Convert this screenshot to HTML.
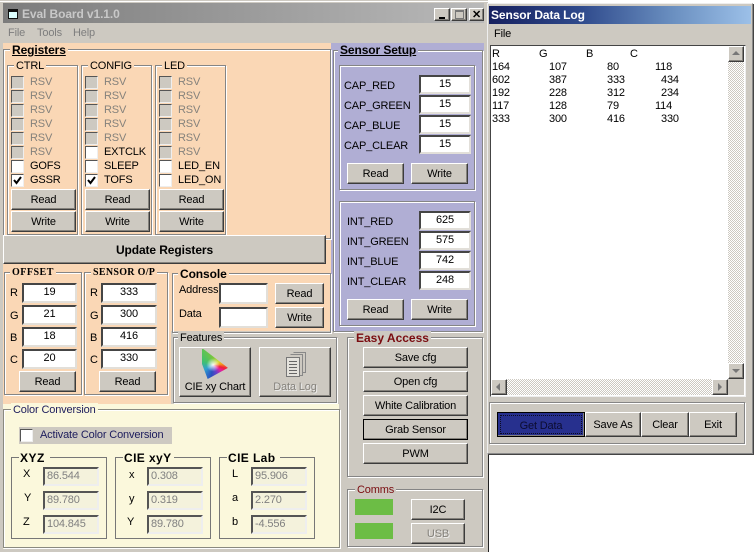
<!DOCTYPE html>
<html><head><meta charset="utf-8"><style>
html,body{margin:0;padding:0;background:#fff}
#p{position:relative;width:756px;height:552px;overflow:hidden;font:11px/14px "Liberation Sans",sans-serif;letter-spacing:-.15px;color:#000;background:#fff}
#p div,#p span,#p i{position:absolute;box-sizing:border-box;display:block;white-space:nowrap;font-style:normal}
.a{background:#cdc9c1}
.g{border:1px solid #858585;box-shadow:inset 1px 1px 0 #fff,1px 1px 0 #fff}
.b{background:#cdc9c1;border:1px solid;border-color:#fff #3c3c3c #3c3c3c #fff;box-shadow:inset -1px -1px 0 #85827c;display:flex!important;align-items:center;justify-content:center}
.dis{color:#85827c;text-shadow:1px 1px 0 #eee}
.i{background:#fff;border:2px solid;border-color:#454545 #e2dfd9 #e2dfd9 #454545;text-align:center;line-height:15px}
.o{border:2px solid;border-color:#555 #eee #eee #555;color:#808080;line-height:14px;padding-left:2px;background:#f4f2dc}
.l{background:#fad7b5;padding:0 2px}
.h{font-weight:bold;font-size:12px}
.col .r{position:relative!important;height:14px;padding-left:19px;line-height:14px}
.r:before{content:"";position:absolute;left:0;top:1px;width:13px;height:13px;box-sizing:border-box;background:#fff;border:1px solid;border-color:#555 #eee #eee #555}
.d{color:#85827c}
.d:before{background:#cdc9c1!important}
.k svg{position:absolute;left:2px;top:3px}
</style></head><body><div id="p">

<div class="a" style="left:0;top:0;width:488px;height:552px"></div>
<div style="left:0;top:1px;width:488px;height:1px;background:#fff"></div>
<div style="left:488px;top:453px;width:1px;height:99px;background:#222"></div>
<div style="left:3px;top:3px;width:481px;height:20px;background:linear-gradient(90deg,#7c7c7c,#b9b9b9)"></div>
<svg style="position:absolute;left:7px;top:8px" width="12" height="11"><path d="M1.500 1.500h9v9h-9z" fill="#dff" stroke="#111"/><path d="M1 3h10" stroke="#111" stroke-width="2"/></svg>
<span class="h" style="left:22px;top:7px;letter-spacing:-.1px;color:#c8c8c8">Eval Board v1.1.0</span>
<div class="b" style="left:434px;top:8px;width:16px;height:13px"><i style="left:4px;top:8px;width:6px;height:2px;background:#000"></i></div>
<div class="b" style="left:451px;top:8px;width:16px;height:13px"><i style="left:3px;top:1px;width:9px;height:9px;border:1px solid #777;border-top-width:2px"></i></div>
<div class="b" style="left:469px;top:8px;width:15px;height:13px;font-size:11px;font-weight:bold">✕</div>
<span style="left:8px;top:26px;color:#7e7e7e">File</span><span style="left:37px;top:26px;color:#7e7e7e">Tools</span><span style="left:73px;top:26px;color:#7e7e7e">Help</span>

<!-- colour zones -->
<div style="left:3px;top:43px;width:329px;height:361px;background:#fad7b5"></div>
<div style="left:331px;top:43px;width:153px;height:288px;background:#b0aed4"></div>
<div class="a" style="left:171px;top:331px;width:170px;height:73px"></div>
<div style="left:3px;top:404px;width:336px;height:145px;background:#fbf8dc"></div>

<!-- Registers -->
<div class="g" style="left:3px;top:49px;width:328px;height:190px"></div>
<span class="l h" style="left:10px;top:43px;text-decoration:underline;letter-spacing:-.1px">Registers</span>

<div class="g" style="left:7px;top:65px;width:71px;height:170px"></div><span class="l" style="left:14px;top:59px">CTRL</span>
<div class="g" style="left:81px;top:65px;width:71px;height:170px"></div><span class="l" style="left:88px;top:59px">CONFIG</span>
<div class="g" style="left:155px;top:65px;width:71px;height:170px"></div><span class="l" style="left:162px;top:59px">LED</span>

<div class="col" style="left:11px;top:75px;width:60px"><div class="r d">RSV</div><div class="r d">RSV</div><div class="r d">RSV</div><div class="r d">RSV</div><div class="r d">RSV</div><div class="r d">RSV</div><div class="r">GOFS</div><div class="r k">GSSR<svg width="9" height="9"><path d="M1 4l2.500 3L8 1" fill="none" stroke="#000" stroke-width="2"/></svg></div></div>
<div class="col" style="left:85px;top:75px;width:62px"><div class="r d">RSV</div><div class="r d">RSV</div><div class="r d">RSV</div><div class="r d">RSV</div><div class="r d">RSV</div><div class="r">EXTCLK</div><div class="r">SLEEP</div><div class="r k">TOFS<svg width="9" height="9"><path d="M1 4l2.500 3L8 1" fill="none" stroke="#000" stroke-width="2"/></svg></div></div>
<div class="col" style="left:159px;top:75px;width:62px"><div class="r d">RSV</div><div class="r d">RSV</div><div class="r d">RSV</div><div class="r d">RSV</div><div class="r d">RSV</div><div class="r d">RSV</div><div class="r">LED_EN</div><div class="r">LED_ON</div></div>

<div class="b" style="left:11px;top:189px;width:65px;height:21px">Read</div>
<div class="b" style="left:11px;top:211px;width:65px;height:21px">Write</div>
<div class="b" style="left:85px;top:189px;width:65px;height:21px">Read</div>
<div class="b" style="left:85px;top:211px;width:65px;height:21px">Write</div>
<div class="b" style="left:159px;top:189px;width:65px;height:21px">Read</div>
<div class="b" style="left:159px;top:211px;width:65px;height:21px">Write</div>

<div class="b h" style="left:3px;top:235px;width:323px;height:29px;letter-spacing:-.1px">Update Registers</div>

<!-- Offset -->
<div class="g" style="left:4px;top:272px;width:78px;height:123px"></div>
<span class="l" style="left:10px;top:266px;font:bold 10px/14px 'Liberation Serif',serif;letter-spacing:.5px">OFFSET</span>
<span style="left:10px;top:286px">R</span><span style="left:10px;top:309px">G</span><span style="left:10px;top:331px">B</span><span style="left:10px;top:353px">C</span>
<div class="i" style="left:22px;top:283px;width:55px;height:20px">19</div>
<div class="i" style="left:22px;top:305px;width:55px;height:20px">21</div>
<div class="i" style="left:22px;top:327px;width:55px;height:20px">18</div>
<div class="i" style="left:22px;top:349px;width:55px;height:20px">20</div>
<div class="b" style="left:19px;top:371px;width:57px;height:21px">Read</div>

<!-- Sensor -->
<div class="g" style="left:84px;top:272px;width:84px;height:123px"></div>
<span class="l" style="left:91px;top:266px;font:bold 10px/14px 'Liberation Serif',serif;letter-spacing:.3px">SENSOR O/P</span>
<span style="left:90px;top:286px">R</span><span style="left:90px;top:309px">G</span><span style="left:90px;top:331px">B</span><span style="left:90px;top:353px">C</span>
<div class="i" style="left:101px;top:283px;width:56px;height:20px">333</div>
<div class="i" style="left:101px;top:305px;width:56px;height:20px">300</div>
<div class="i" style="left:101px;top:327px;width:56px;height:20px">416</div>
<div class="i" style="left:101px;top:349px;width:56px;height:20px">330</div>
<div class="b" style="left:99px;top:371px;width:57px;height:21px">Read</div>

<!-- Console -->
<div class="g" style="left:172px;top:273px;width:159px;height:60px"></div>
<span class="l h" style="left:178px;top:267px;letter-spacing:-.1px">Console</span>
<span style="left:179px;top:283px">Address</span><span style="left:179px;top:307px">Data</span>
<div class="i" style="left:219px;top:283px;width:49px;height:21px"></div>
<div class="i" style="left:219px;top:307px;width:49px;height:21px"></div>
<div class="b" style="left:275px;top:283px;width:49px;height:21px">Read</div>
<div class="b" style="left:275px;top:307px;width:49px;height:21px">Write</div>

<!-- Features -->
<div class="g" style="left:173px;top:337px;width:164px;height:66px"></div>
<span class="a" style="left:178px;top:331px;padding:0 2px">Features</span>
<div class="b" style="left:179px;top:347px;width:72px;height:50px;align-items:flex-end;padding-bottom:2px">CIE xy Chart</div>
<div style="left:202px;top:349px;width:27px;height:30px;clip-path:polygon(0 0,5% 0,96% 63%,21% 100%,0 50%);background:radial-gradient(circle at 41% 53%,rgba(255,255,255,.95) 0,rgba(255,255,255,0) 30%),conic-gradient(from 0deg at 41% 53%,#7ac63c 0deg,#d8d82c 60deg,#f59a20 85deg,#f0203a 105deg,#e020a0 125deg,#6a40c8 155deg,#2a50c0 190deg,#30a0d0 240deg,#40c070 290deg,#7ac63c 360deg)"></div>
<div class="b dis" style="left:259px;top:347px;width:72px;height:50px;align-items:flex-end;padding-bottom:2px">Data Log</div>
<svg style="position:absolute;left:285px;top:351px" width="23" height="28"><path d="M8.500 1.500h12v20h-3" fill="none" stroke="#888"/><path d="M5.500 3.500h12v21h-3" fill="#cdc9c1" stroke="#888"/><path d="M1.500 6.500h13v19h-13z" fill="#e4e2dc" stroke="#777"/><path d="M4 10.500h8M4 13.500h8M4 16.500h8M4 19.500h8M4 22.500h8" stroke="#666"/></svg>

<!-- Colour conversion -->
<div class="g" style="left:3px;top:409px;width:337px;height:139px;border-color:#8a8a80"></div>
<span style="left:11px;top:403px;background:#fbf8dc;padding:0 2px;color:#1c1c5c">Color Conversion</span>
<div style="left:19px;top:427px;width:153px;height:17px;background:#cdc9c1"></div>
<div style="left:20px;top:429px;width:13px;height:13px;background:#fff;border:1px solid;border-color:#555 #eee #eee #555"></div>
<span style="left:40px;top:428px;color:#1c1c5c">Activate Color Conversion</span>

<div class="g" style="left:11px;top:457px;width:96px;height:82px;border-color:#777;box-shadow:none"></div>
<span class="h" style="left:19px;top:451px;background:#fbf8dc;padding:0 5px 0 1px;letter-spacing:.5px">XYZ</span>
<div class="g" style="left:115px;top:457px;width:96px;height:82px;border-color:#777;box-shadow:none"></div>
<span class="h" style="left:123px;top:451px;background:#fbf8dc;padding:0 2px 0 1px;letter-spacing:.4px">CIE xyY</span>
<div class="g" style="left:219px;top:457px;width:96px;height:82px;border-color:#777;box-shadow:none"></div>
<span class="h" style="left:227px;top:451px;background:#fbf8dc;padding:0 5px 0 1px;letter-spacing:.4px">CIE Lab</span>

<span style="left:23px;top:467px">X</span><span style="left:24px;top:491px">Y</span><span style="left:23px;top:515px">Z</span>
<span style="left:129px;top:468px">x</span><span style="left:129px;top:492px">y</span><span style="left:127px;top:515px">Y</span>
<span style="left:232px;top:467px">L</span><span style="left:232px;top:491px">a</span><span style="left:232px;top:515px">b</span>

<div class="o" style="left:43px;top:467px;width:56px;height:19px">86.544</div>
<div class="o" style="left:43px;top:491px;width:56px;height:19px">89.780</div>
<div class="o" style="left:43px;top:515px;width:56px;height:19px">104.845</div>
<div class="o" style="left:147px;top:467px;width:56px;height:19px">0.308</div>
<div class="o" style="left:147px;top:491px;width:56px;height:19px">0.319</div>
<div class="o" style="left:147px;top:515px;width:56px;height:19px">89.780</div>
<div class="o" style="left:251px;top:467px;width:56px;height:19px">95.906</div>
<div class="o" style="left:251px;top:491px;width:56px;height:19px">2.270</div>
<div class="o" style="left:251px;top:515px;width:56px;height:19px">-4.556</div>

<!-- Sensor setup -->
<div class="g" style="left:333px;top:50px;width:150px;height:282px"></div>
<span class="h" style="left:338px;top:43px;background:#b0aed4;padding:0 2px;text-decoration:underline;letter-spacing:-.1px">Sensor Setup</span>
<div class="g" style="left:339px;top:65px;width:136px;height:125px"></div>
<div class="g" style="left:339px;top:201px;width:136px;height:125px"></div>
<span style="left:344px;top:79px">CAP_RED</span><span style="left:344px;top:99px">CAP_GREEN</span><span style="left:344px;top:119px">CAP_BLUE</span><span style="left:344px;top:139px">CAP_CLEAR</span>
<div class="i" style="left:419px;top:75px;width:52px;height:19px">15</div>
<div class="i" style="left:419px;top:95px;width:52px;height:19px">15</div>
<div class="i" style="left:419px;top:115px;width:52px;height:19px">15</div>
<div class="i" style="left:419px;top:135px;width:52px;height:19px">15</div>
<div class="b" style="left:347px;top:163px;width:57px;height:21px">Read</div>
<div class="b" style="left:411px;top:163px;width:57px;height:21px">Write</div>
<span style="left:347px;top:215px">INT_RED</span><span style="left:347px;top:235px">INT_GREEN</span><span style="left:347px;top:255px">INT_BLUE</span><span style="left:347px;top:275px">INT_CLEAR</span>
<div class="i" style="left:419px;top:211px;width:52px;height:19px">625</div>
<div class="i" style="left:419px;top:231px;width:52px;height:19px">575</div>
<div class="i" style="left:419px;top:251px;width:52px;height:19px">742</div>
<div class="i" style="left:419px;top:271px;width:52px;height:19px">248</div>
<div class="b" style="left:347px;top:299px;width:57px;height:21px">Read</div>
<div class="b" style="left:411px;top:299px;width:57px;height:21px">Write</div>

<!-- Easy access -->
<div class="g" style="left:347px;top:337px;width:136px;height:140px"></div>
<span class="a h" style="left:354px;top:331px;padding:0 2px;color:#7a0c10;letter-spacing:0">Easy Access</span>
<div class="b" style="left:363px;top:347px;width:105px;height:21px">Save cfg</div>
<div class="b" style="left:363px;top:371px;width:105px;height:21px">Open cfg</div>
<div class="b" style="left:363px;top:395px;width:105px;height:21px">White Calibration</div>
<div class="b" style="left:363px;top:419px;width:105px;height:21px;outline:1px solid #000;outline-offset:-1px">Grab Sensor</div>
<div class="b" style="left:363px;top:443px;width:105px;height:21px">PWM</div>

<div class="g" style="left:347px;top:489px;width:136px;height:58px"></div>
<span class="a" style="left:355px;top:483px;padding:0 2px;color:#7a0c10">Comms</span>
<div style="left:355px;top:499px;width:38px;height:16px;background:#6cbd45"></div>
<div style="left:355px;top:523px;width:38px;height:16px;background:#6cbd45"></div>
<div class="b" style="left:411px;top:499px;width:54px;height:21px">I2C</div>
<div class="b dis" style="left:411px;top:523px;width:54px;height:21px">USB</div>

<!-- Data log window -->
<div class="a" style="left:487px;top:3px;width:266px;height:451px;border:1px solid #8a8a8a;border-left-color:#eee;border-top-color:#eee;box-shadow:1px 1px 0 #444"></div>
<div style="left:489px;top:6px;width:262px;height:18px;background:linear-gradient(90deg,#16205f,#2f4a8c 35%,#6a8fc0 70%,#9cc0e8)"></div>
<span class="h" style="left:491px;top:8px;color:#fff;letter-spacing:-.1px">Sensor Data Log</span>
<span style="left:494px;top:27px">File</span>
<div style="left:490px;top:45px;width:256px;height:352px;background:#fff;border:1px solid;border-color:#444 #eee #eee #444"></div>
<div style="left:728px;top:47px;width:16px;height:332px;background:repeating-conic-gradient(#cdc9c1 0 25%,#fff 0 50%) 0 0/2px 2px"></div>
<div style="left:491px;top:379px;width:237px;height:16px;background:repeating-conic-gradient(#cdc9c1 0 25%,#fff 0 50%) 0 0/2px 2px"></div>
<div class="a" style="left:728px;top:379px;width:16px;height:16px"></div>
<div class="b" style="left:728px;top:46px;width:16px;height:16px"><i style="left:3px;top:4px;width:0;height:0;border:4px solid transparent;border-bottom-color:#777;border-top:0"></i></div>
<div class="b" style="left:728px;top:363px;width:16px;height:16px"><i style="left:3px;top:5px;width:0;height:0;border:4px solid transparent;border-top-color:#777;border-bottom:0"></i></div>
<div class="b" style="left:491px;top:379px;width:16px;height:16px"><i style="left:4px;top:3px;width:0;height:0;border:4px solid transparent;border-right-color:#777;border-left:0"></i></div>
<div class="b" style="left:712px;top:379px;width:16px;height:16px"><i style="left:5px;top:3px;width:0;height:0;border:4px solid transparent;border-left-color:#777;border-right:0"></i></div>

<span style="left:492px;top:47px">R</span><span style="left:539px;top:47px">G</span><span style="left:586px;top:47px">B</span><span style="left:630px;top:47px">C</span>
<span style="left:492px;top:60px">164</span><span style="left:549px;top:60px">107</span><span style="left:607px;top:60px">80</span><span style="left:655px;top:60px">118</span>
<span style="left:492px;top:73px">602</span><span style="left:549px;top:73px">387</span><span style="left:607px;top:73px">333</span><span style="left:661px;top:73px">434</span>
<span style="left:492px;top:86px">192</span><span style="left:549px;top:86px">228</span><span style="left:607px;top:86px">312</span><span style="left:661px;top:86px">234</span>
<span style="left:492px;top:99px">117</span><span style="left:549px;top:99px">128</span><span style="left:607px;top:99px">79</span><span style="left:655px;top:99px">114</span>
<span style="left:492px;top:112px">333</span><span style="left:549px;top:112px">300</span><span style="left:607px;top:112px">416</span><span style="left:661px;top:112px">330</span>

<div class="g" style="left:489px;top:402px;width:256px;height:42px"></div>
<div class="b" style="left:497px;top:412px;width:88px;height:25px;background:#27308e;outline:1px solid #000;outline-offset:-1px;padding-top:2px;color:#0c0c30">Get Data</div>
<div style="left:500px;top:415px;width:82px;height:19px;border:1px dotted #0a0a20"></div>
<div class="b" style="left:585px;top:412px;width:56px;height:25px">Save As</div>
<div class="b" style="left:641px;top:412px;width:48px;height:25px">Clear</div>
<div class="b" style="left:689px;top:412px;width:48px;height:25px">Exit</div>

</div></body></html>
